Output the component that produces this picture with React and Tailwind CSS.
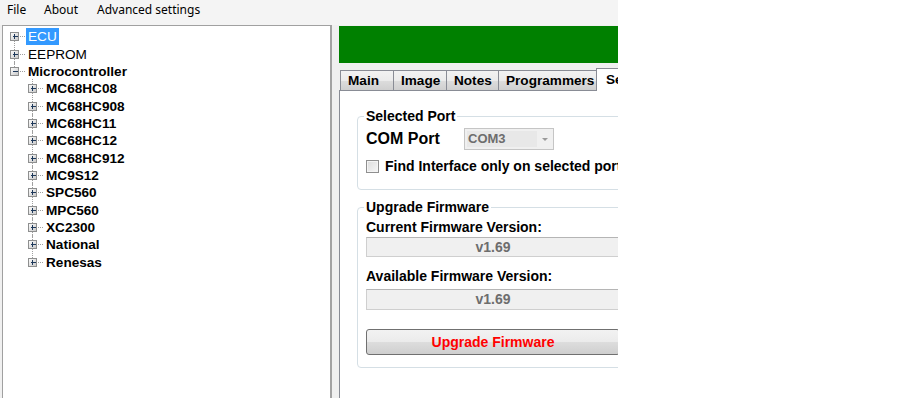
const treeRows = [
  { label: "ECU", level: 0, selected: true, first: true },
  { label: "EEPROM", level: 0 },
  { label: "Microcontroller", level: 0, bold: true, open: true, last: true },
  { label: "MC68HC08", level: 1, bold: true },
  { label: "MC68HC908", level: 1, bold: true },
  { label: "MC68HC11", level: 1, bold: true },
  { label: "MC68HC12", level: 1, bold: true },
  { label: "MC68HC912", level: 1, bold: true },
  { label: "MC9S12", level: 1, bold: true },
  { label: "SPC560", level: 1, bold: true },
  { label: "MPC560", level: 1, bold: true },
  { label: "XC2300", level: 1, bold: true },
  { label: "National", level: 1, bold: true },
  { label: "Renesas", level: 1, bold: true, last: true },
]

const tabs = [
  { label: "Main", w: "w-[53px]" },
  { label: "Image", w: "w-[53px]" },
  { label: "Notes", w: "w-[52px]" },
  { label: "Programmers", w: "w-[99px]" },
]

function Gutter({ level, open, first, last }) {
  const w = level === 0 ? 23 : 41
  const cx = level === 0 ? 11.5 : 29.5
  const bx = cx - 4
  return (
    <svg width={w} height="17" className="shrink-0 overflow-visible" shapeRendering="crispEdges">
      {/* tree lines */}
      <line x1={cx} y1={first ? 8.5 : -1} x2={cx} y2={last ? 8.5 : 18} stroke="#a0a0a0" strokeDasharray="1 1" />
      <line x1={cx + 5} y1="8.5" x2={w - 1} y2="8.5" stroke="#a0a0a0" strokeDasharray="1 1" />
      {/* expander box */}
      <defs>
        <linearGradient id="exp" x1="0" y1="0" x2="1" y2="1">
          <stop offset="0" stopColor="#ffffff" />
          <stop offset="1" stopColor="#c6c6c6" />
        </linearGradient>
      </defs>
      <rect x={bx} y="4.5" width="8" height="8" fill="url(#exp)" stroke="#8e8f8f" />
      <line x1={bx + 2} y1="8.5" x2={bx + 7} y2="8.5" stroke="#1e395b" />
      {!open && <line x1={cx} y1="6" x2={cx} y2="11" stroke="#1e395b" />}
    </svg>
  )
}

function TreeRow({ row }) {
  return (
    <div className="flex h-[17.35px] items-center">
      <Gutter level={row.level} open={row.open} first={row.first} last={row.last} />
      <span
        className={
          row.selected
            ? "h-[17px] bg-[#3399ff] px-[2px] leading-[17px] text-white"
            : row.bold
              ? "px-[2px] font-bold leading-[17px] text-black"
              : "px-[2px] leading-[17px] text-black"
        }
      >
        {row.label}
      </span>
    </div>
  )
}

function VersionBox({ value, h }) {
  return (
    <div
      className={`${h} flex w-[254px] items-center justify-center border border-[#cfcfcf] border-t-[#b5b5b5] bg-[#f0f0f0] text-[14px] font-bold text-[#6d6d6d]`}
    >
      {value}
    </div>
  )
}

export default function App() {
  return (
    <div className="flex h-[398px] w-[900px] overflow-hidden bg-white font-['Liberation_Sans',Arial,sans-serif]">

      {/* Window */}
      <div className="flex h-full w-[618px] shrink-0 flex-col overflow-hidden bg-[#f0f0f0]">

        {/* Menu bar */}
        <div className="flex h-[25px] shrink-0 bg-[#f4f4f4] pt-[2px] pl-[7px] font-['Noto_Sans',sans-serif] text-[12px] leading-[16px] text-black">
          <span className="w-[37px]">File</span>
          <span className="w-[53px]">About</span>
          <span>Advanced settings</span>
        </div>

        <div className="flex min-h-0 flex-1 pl-[2px]">

          {/* Tree */}
          <div className="h-[380px] w-[330px] shrink-0 border border-[#a0a0a0] border-r-2 border-r-[#a3a3a3] bg-white pt-[2px] text-[13.6px]">
            {treeRows.map((row) => (
              <TreeRow key={row.label} row={row} />
            ))}
          </div>

          {/* Right pane */}
          <div className="ml-[7px] flex w-[330px] shrink-0 flex-col">

            <div className="mt-[1px] h-[37px] bg-[#008000]" />

            {/* Tabs */}
            <div className="relative z-10 mt-[5px] flex h-[22px] items-end pl-[1px] text-[13.6px] font-bold">
              {tabs.map((t) => (
                <div
                  key={t.label}
                  className={`${t.w} h-[20px] shrink-0 border border-b-0 border-r-0 border-[#898c95] bg-[linear-gradient(#f2f2f2,#ebebeb_50%,#dddddd_50%,#cfcfcf)] pl-[7px] leading-[19px]`}
                >
                  {t.label}
                </div>
              ))}
              <div className="-mb-px -ml-[1px] h-[23px] w-[90px] shrink-0 border border-b-0 border-[#898c95] bg-white pl-[9px] leading-[22px]">
                Settings
              </div>
            </div>

            {/* Tab page */}
            <div className="flex-1 border-t border-l border-[#898c95] bg-white pl-[17px] pt-[17px] text-black">

              <fieldset className="w-[320px] rounded-[4px] border border-[#d5dfe5] pt-[4px] pb-[15px] pl-[8px]">
                <legend className="-ml-[2px] px-[2px] text-[14px] font-bold leading-[16px]">
                  Selected Port
                </legend>

                <div className="flex h-[22px] items-center">
                  <span className="w-[98px] text-[16px] font-bold leading-[18px]">COM Port</span>
                  <div className="flex h-[22px] w-[90px] items-center border border-[#c5c5c5] bg-[#f0f0f0]">
                    <span className="ml-[2px] w-[70px] bg-[#e8e8e8] pl-[1px] text-[13px] font-bold leading-[16px] text-[#6d6d6d]">
                      COM3
                    </span>
                    <svg width="14" height="20" viewBox="0 0 14 20" className="ml-[1px]">
                      <path d="M4 9h6l-3 3z" fill="#9a9a9a" />
                    </svg>
                  </div>
                </div>

                <div className="mt-[8px] flex h-[16px] items-center">
                  <span className="h-[13px] w-[13px] shrink-0 border border-[#8f8f8f] bg-[linear-gradient(135deg,#dcdcdc,#f6f6f6)] shadow-[inset_0_0_0_1px_#f4f4f4]" />
                  <span className="ml-[6px] whitespace-nowrap text-[14px] font-bold leading-[16px]">
                    Find Interface only on selected port
                  </span>
                </div>
              </fieldset>

              <fieldset className="mt-[9px] w-[320px] rounded-[4px] border border-[#d5dfe5] pt-[4px] pb-[12px] pl-[8px]">
                <legend className="-ml-[2px] px-[2px] text-[14px] font-bold leading-[16px]">
                  Upgrade Firmware
                </legend>

                <div className="text-[14px] font-bold leading-[16px]">Current Firmware Version:</div>
                <div className="mt-[2px]">
                  <VersionBox value="v1.69" h="h-[20px]" />
                </div>

                <div className="mt-[11px] text-[14px] font-bold leading-[16px]">Available Firmware Version:</div>
                <div className="mt-[5px]">
                  <VersionBox value="v1.69" h="h-[21px]" />
                </div>

                <button className="mt-[19px] flex h-[26px] w-[254px] items-center justify-center rounded-[3px] border border-[#707070] bg-[linear-gradient(#f2f2f2,#ebebeb_50%,#dddddd_50%,#cfcfcf)] text-[14px] font-bold text-[#ff0000]">
                  Upgrade Firmware
                </button>
              </fieldset>

            </div>
          </div>
        </div>
      </div>
    </div>
  )
}
